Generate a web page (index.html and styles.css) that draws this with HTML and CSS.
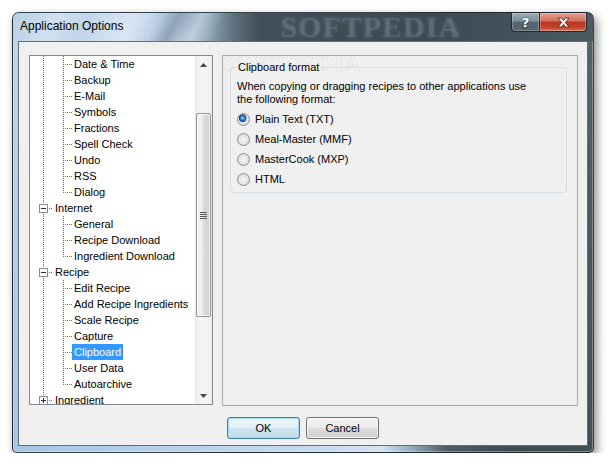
FILE: index.html
```html
<!DOCTYPE html>
<html lang="en">

<head>
    <meta charset="UTF-8">
    <meta name="viewport" content="width=device-width, initial-scale=1.0">
    <title>Application Options</title>

    <link rel="stylesheet" href="styles.css">
</head>

<body>
    <div class="window">
        <div class="titlebar">
            <span class="title">Application Options</span>
            <span class="brand">SOFTPEDIA</span>
            <div class="caption">
                <span class="cap help">?</span>
                <span class="cap close">
                    <svg width="13" height="11" viewBox="0 0 13 11">
                        <path d="M1 1h3.4l2.1 2.6L8.6 1H12L8.3 5.5 12 10H8.6L6.5 7.4 4.4 10H1l3.7-4.5z" fill="#fff" stroke="#4a1208" stroke-width=".8" stroke-linejoin="round" />
                    </svg>
                </span>
            </div>
        </div>

        <div class="client">
            <div class="main">
                <div class="tree">
                    <div class="nodes">
                        <div class="node"><span class="col a"></span><span class="col tee"></span><span class="label">Date &amp; Time</span></div>
                        <div class="node"><span class="col a"></span><span class="col tee"></span><span class="label">Backup</span></div>
                        <div class="node"><span class="col a"></span><span class="col tee"></span><span class="label">E-Mail</span></div>
                        <div class="node"><span class="col a"></span><span class="col tee"></span><span class="label">Symbols</span></div>
                        <div class="node"><span class="col a"></span><span class="col tee"></span><span class="label">Fractions</span></div>
                        <div class="node"><span class="col a"></span><span class="col tee"></span><span class="label">Spell Check</span></div>
                        <div class="node"><span class="col a"></span><span class="col tee"></span><span class="label">Undo</span></div>
                        <div class="node"><span class="col a"></span><span class="col tee"></span><span class="label">RSS</span></div>
                        <div class="node"><span class="col a"></span><span class="col ell"></span><span class="label">Dialog</span></div>
                        <div class="node"><span class="col a root">
                                <svg class="exp" width="9" height="9" viewBox="0 0 9 9"><rect x=".5" y=".5" width="8" height="8" fill="#fff" stroke="#8e8e8e" /><path d="M2 4.5h5" stroke="#1c2b4a" /></svg>
                            </span><span class="label">Internet</span></div>
                        <div class="node"><span class="col a"></span><span class="col tee"></span><span class="label">General</span></div>
                        <div class="node"><span class="col a"></span><span class="col tee"></span><span class="label">Recipe Download</span></div>
                        <div class="node"><span class="col a"></span><span class="col ell"></span><span class="label">Ingredient Download</span></div>
                        <div class="node"><span class="col a root">
                                <svg class="exp" width="9" height="9" viewBox="0 0 9 9"><rect x=".5" y=".5" width="8" height="8" fill="#fff" stroke="#8e8e8e" /><path d="M2 4.5h5" stroke="#1c2b4a" /></svg>
                            </span><span class="label">Recipe</span></div>
                        <div class="node"><span class="col a"></span><span class="col tee"></span><span class="label">Edit Recipe</span></div>
                        <div class="node"><span class="col a"></span><span class="col tee"></span><span class="label">Add Recipe Ingredients</span></div>
                        <div class="node"><span class="col a"></span><span class="col tee"></span><span class="label">Scale Recipe</span></div>
                        <div class="node"><span class="col a"></span><span class="col tee"></span><span class="label">Capture</span></div>
                        <div class="node"><span class="col a"></span><span class="col tee"></span><span class="label selected">Clipboard</span></div>
                        <div class="node"><span class="col a"></span><span class="col tee"></span><span class="label">User Data</span></div>
                        <div class="node"><span class="col a"></span><span class="col ell"></span><span class="label">Autoarchive</span></div>
                        <div class="node"><span class="col a root">
                                <svg class="exp" width="9" height="9" viewBox="0 0 9 9"><rect x=".5" y=".5" width="8" height="8" fill="#fff" stroke="#8e8e8e" /><path d="M2 4.5h5M4.5 2v5" stroke="#1c2b4a" /></svg>
                            </span><span class="label">Ingredient</span></div>
                    </div>
                    <div class="vscroll">
                        <span class="arrow"><svg width="7" height="4" viewBox="0 0 7 4"><path d="M0 4L3.5 0 7 4z" fill="#444" /></svg></span>
                        <div class="track">
                            <span class="thumb"><svg width="7" height="7" viewBox="0 0 7 7"><path d="M0 .5h7M0 2.5h7M0 4.5h7M0 6.5h7" stroke="#5a5a5a" /></svg></span>
                        </div>
                        <span class="arrow"><svg width="7" height="4" viewBox="0 0 7 4"><path d="M0 0h7L3.5 4z" fill="#444" /></svg></span>
                    </div>
                </div>

                <div class="panel">
                    <fieldset class="group">
                        <legend>Clipboard format</legend>
                        <p>When copying or dragging recipes to other applications use<br>the following format:</p>
                        <label class="option first"><span class="radio checked"></span>Plain Text (TXT)</label>
                        <label class="option"><span class="radio"></span>Meal-Master (MMF)</label>
                        <label class="option"><span class="radio"></span>MasterCook (MXP)</label>
                        <label class="option"><span class="radio"></span>HTML</label>
                    </fieldset>
                    <span class="ghost">SOFTPEDIA</span>
                </div>
            </div>

            <div class="buttons">
                <button class="btn default">OK</button>
                <button class="btn">Cancel</button>
            </div>
        </div>
    </div>
</body>

</html>
```

FILE: styles.css
```css
:root {
    --dot-v: repeating-linear-gradient(to bottom, #6e6e6e 0 1px, transparent 1px 2px);
    --dot-h: repeating-linear-gradient(to right, #6e6e6e 0 1px, transparent 1px 2px);
}

* {
    box-sizing: border-box;
}

html,
body {
    margin: 0;
}

body {
    background-color: #fff;
    font: 11px "Liberation Sans", Arial, sans-serif;
    color: #000;
}

.window {
    margin: 12px 0 0 12px;
    width: 582px;
    height: 441px;
    padding: 0 5px 6px;
    display: flex;
    flex-direction: column;
    border: 1px solid rgba(20, 30, 36, 0.8);
    border-radius: 7px 7px 5px 5px;
    background: linear-gradient(63deg, #a6c6e4 0%, #bcd4ea 25%, #c9dcef 40%, #d3e4f3 46%, #90a8ba 50%, #4d5d66 54%, #3d4b53 62%, #45555b 80%, #52666a 100%);
    box-shadow: inset 0 0 0 1px rgba(255, 255, 255, 0.3), 3px 4px 10px rgba(0, 0, 0, 0.45);
}

/* title bar */
.titlebar {
    height: 28px;
    margin: 0 -5px;
    padding: 0 6px 0 7px;
    display: flex;
    align-items: flex-start;
    overflow: hidden;
    border-radius: 6px 6px 0 0;
    background:
        linear-gradient(118deg, rgba(255, 255, 255, 0) 0%, rgba(255, 255, 255, 0.3) 8%, rgba(255, 255, 255, 0) 13%, rgba(255, 255, 255, 0.35) 21%, rgba(255, 255, 255, 0) 25%, rgba(30, 45, 60, 0.25) 28%, rgba(255, 255, 255, 0.3) 32%, rgba(255, 255, 255, 0) 36%, rgba(255, 255, 255, 0) 100%),
        linear-gradient(90deg, #b7cfe6 0px, #c6daec 110px, #b2c9de 165px, #8ca5b8 195px, #5c6f7b 222px, #414f58 245px, #3b4951 400px, #42515a 500px, #4b5b61 580px);
}

.title {
    margin-top: 6px;
    font-size: 12px;
    line-height: 15px;
    white-space: nowrap;
}

.brand {
    margin-left: 157px;
    font: bold 30px/28px "Liberation Serif", serif;
    letter-spacing: 1px;
    color: rgba(115, 136, 148, 0.4);
    text-shadow: 0 0 4px rgba(110, 130, 142, 0.45);
    white-space: nowrap;
}

.caption {
    margin-left: auto;
    display: flex;
}

.cap {
    height: 19px;
    display: flex;
    align-items: center;
    justify-content: center;
    border: 1px solid #1f2a31;
    border-top: none;
    box-shadow: inset 0 0 0 1px rgba(255, 255, 255, 0.25);
}

.help {
    width: 28px;
    border-right: none;
    border-radius: 0 0 0 4px;
    background: linear-gradient(#9eacb5 0%, #7d8e98 45%, #56666f 50%, #536370 100%);
    color: #fff;
    font: bold 13px "DejaVu Sans", sans-serif;
    text-shadow: 0 0 2px #1c2730;
}

.close {
    width: 48px;
    border-radius: 0 0 4px 0;
    background: linear-gradient(#e6a092 0%, #d2705d 45%, #b93722 50%, #c0412b 78%, #d77760 100%);
}

/* client area */
.client {
    flex: 1;
    padding: 13px 9px 0 10px;
    display: flex;
    flex-direction: column;
    background-color: #f0f0f0;
    border: 1px solid #5f707a;
}

.main {
    display: flex;
    align-items: flex-start;
    gap: 9px;
}

.tree {
    width: 184px;
    height: 350px;
    display: flex;
    background-color: #fff;
    border: 1px solid #828790;
}

.nodes {
    flex: 1;
    overflow: hidden;
}

.node {
    height: 16px;
    display: flex;
}

.col {
    flex: none;
    width: 19px;
    height: 16px;
}

.col.a {
    width: 23px;
    background: var(--dot-v) 13px 0 / 1px 16px no-repeat;
}

.col.root {
    background: var(--dot-v) 13px 0 / 1px 16px no-repeat, var(--dot-h) 19px 8px / 4px 1px no-repeat;
}

.col.tee {
    background: var(--dot-v) 10px 0 / 1px 16px no-repeat, var(--dot-h) 10px 8px / 9px 1px no-repeat;
}

.col.ell {
    background: var(--dot-v) 10px 0 / 1px 9px no-repeat, var(--dot-h) 10px 8px / 9px 1px no-repeat;
}

.exp {
    display: block;
    margin: 4px 0 0 9px;
}

.label {
    padding: 0 2px;
    line-height: 16px;
    white-space: nowrap;
}

.label.selected {
    background-color: #3399ff;
    color: #fff;
}

.vscroll {
    flex: none;
    width: 17px;
    display: flex;
    flex-direction: column;
    background: linear-gradient(90deg, #e4e4e4 0, #f1f1f1 2px, #f6f6f6 50%, #f1f1f1 calc(100% - 2px), #e8e8e8 100%);
}

.arrow {
    height: 17px;
    display: flex;
    align-items: center;
    justify-content: center;
}

.track {
    flex: 1;
    padding-top: 40px;
}

.thumb {
    height: 204px;
    margin: 0 1px;
    display: flex;
    align-items: center;
    justify-content: center;
    border: 1px solid #959595;
    border-radius: 2px;
    background: linear-gradient(90deg, #f4f4f4 0%, #ebebeb 50%, #dcdcdc 50%, #cfcfcf 100%);
    box-shadow: inset 0 0 0 1px rgba(255, 255, 255, 0.75);
}

.panel {
    flex: 1;
    height: 351px;
    padding: 5px 10px 0 7px;
    position: relative;
    overflow: hidden;
    border: 1px solid #a9a9a9;
}

.group {
    margin: 0;
    min-width: 0;
    padding: 6px 6px 3px;
    border: 1px solid #d5dfe5;
    border-radius: 3px;
}

.group legend {
    padding: 0 1px;
    line-height: 13px;
}

.group p {
    margin: 0;
    line-height: 13px;
    white-space: nowrap;
}

.option {
    height: 20px;
    display: flex;
    align-items: center;
    gap: 5px;
}

.option.first {
    margin-top: 3px;
}

.radio {
    width: 13px;
    height: 13px;
    border-radius: 50%;
    border: 1px solid #8c8f90;
    background: radial-gradient(circle, #f6f6f6 0, #e4e4e4 55%, #cdcdcd 100%);
}

.radio.checked {
    background: radial-gradient(circle at 42% 38%, #b8e6ff 0, #3d93dc 1.5px, #1b5ca2 3px, #123f78 3.6px, rgba(0, 0, 0, 0) 4.1px), radial-gradient(circle, #f6f6f6 0, #e4e4e4 55%, #cdcdcd 100%);
}

.ghost {
    position: absolute;
    left: -2px;
    top: -5px;
    font: bold 23px "Liberation Serif", serif;
    letter-spacing: 1px;
    color: transparent;
    -webkit-text-stroke: 1px rgba(0, 0, 0, 0.05);
    pointer-events: none;
}

/* dialog buttons */
.buttons {
    display: flex;
    gap: 6px;
    margin-top: 11px;
    padding-left: 198px;
}

.btn {
    width: 73px;
    height: 22px;
    padding: 0;
    font: 11px "Liberation Sans", Arial, sans-serif;
    color: #000;
    border: 1px solid #707070;
    border-radius: 3px;
    background: linear-gradient(#f2f2f2 0%, #ebebeb 50%, #dddddd 50%, #cfcfcf 100%);
    box-shadow: inset 0 0 0 1px rgba(255, 255, 255, 0.7);
}

.btn.default {
    border-color: #3c7fb1;
    background: linear-gradient(#eef6fa 0%, #e3eff6 50%, #d0e4ef 50%, #c4dbe8 100%);
    box-shadow: inset 0 0 0 1px #9fdcf4;
}
```
